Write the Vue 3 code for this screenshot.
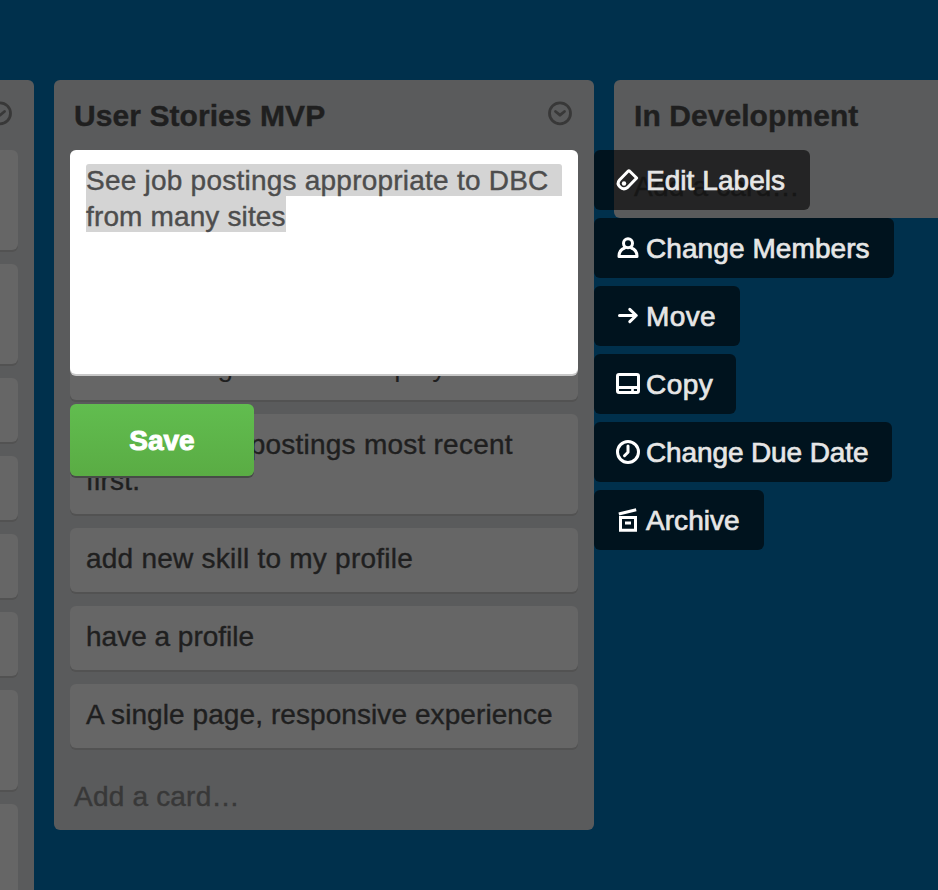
<script setup>
const leftCards = ['two', 'two', 'one', 'one', 'one', 'one', 'two', 'two']
const actions = [
  { id: 'labels', text: 'Edit Labels' },
  { id: 'members', text: 'Change Members' },
  { id: 'move', text: 'Move' },
  { id: 'copy', text: 'Copy' },
  { id: 'due', text: 'Change Due Date' },
  { id: 'archive', text: 'Archive' }
]
</script>

<template>
  <main class="board">
    <section class="list previous">
      <header class="head"><h2></h2>
        <svg class="chevron" viewBox="0 0 24 24"><circle cx="12" cy="12.300" r="10.500" /><path d="M7.500 10.500 12 14.200l4.500-3.700" /></svg>
      </header>
      <div class="cards">
        <article v-for="(size, i) in leftCards" :key="i" class="card" :class="size"></article>
      </div>
    </section>

    <section class="list stories">
      <header class="head"><h2>User Stories MVP</h2>
        <svg class="chevron" viewBox="0 0 24 24"><circle cx="12" cy="12.300" r="10.500" /><path d="M7.500 10.500 12 14.200l4.500-3.700" /></svg>
      </header>
      <div class="cards">
        <article class="card three"></article>
        <article class="card two"><p class="t-wide t-plain"><br>of matching titles are displayed on a</p></article>
        <article class="card two"><p class="t-wide">Order all job postings most recent<br>first.</p></article>
        <article class="card one"><p class="t-wide">add new skill to my profile</p></article>
        <article class="card one"><p>have a profile</p></article>
        <article class="card one"><p class="t-single">A single page, responsive experience</p></article>
      </div>
      <footer class="add">Add a card…</footer>

      <div class="editor">
        <div class="edit-card"><p><span class="sel first">See job postings appropriate to DBC</span><span class="sel second">from many sites</span></p></div>
        <button class="save">Save</button>
      </div>

      <nav class="actions">
        <a v-for="a in actions" :key="a.id" class="action" :class="a.id">
          <svg class="icon" viewBox="0 0 24 24">
            <g v-if="a.id === 'labels'"><path d="M13.500 3 20.700 10 11.500 19.500Q7.500 22.500 4 19T3.500 12L12 3.200Q12.800 2.400 13.500 3Z" /><circle class="solid" cx="8" cy="15.500" r="2.200" /></g>
            <g v-else-if="a.id === 'members'"><circle cx="12" cy="7.300" r="4.500" /><path d="M8.500 12Q3 14 3 20.500H21Q21 14 15.500 12" /></g>
            <path v-else-if="a.id === 'move'" d="M3.500 11.500H20M13.800 5.300l6.500 6.200-6.500 6.200" />
            <g v-else-if="a.id === 'copy'"><rect x="1.500" y="2.500" width="21" height="18" rx="1.500" /><path d="M2 15.500H22" /><path class="solid" d="M2 17H15V20H2ZM19.500 17H22V20H19.500Z" opacity="0" /><circle class="solid" cx="16.500" cy="18" r="1.500" /></g>
            <g v-else-if="a.id === 'due'"><circle cx="12" cy="12" r="10.500" /><path d="M12 6V12.200L8.500 15.700" /></g>
            <g v-else class="square"><path d="M2.800 6 20.200 1.800M4.500 9.500H19.500V22.200H4.500ZM9 15H15" /></g>
          </svg>
          <span>{{ a.text }}</span>
        </a>
      </nav>
    </section>

    <section class="list development">
      <header class="head"><h2>In Development</h2></header>
      <footer class="add">Add a card…</footer>
    </section>
  </main>
</template>

<style>
body { margin: 0; background: #00304c; }
</style>

<style scoped>
.board {
  box-sizing: border-box;
  width: 938px;
  height: 890px;
  padding-top: 80px;
  overflow: hidden;
  display: flex;
  align-items: flex-start;
  gap: 20px;
  background: #00304c;
  font-family: "Liberation Sans", Arial, sans-serif;
  font-size: 28px;
  line-height: 36px;
  color: #1f1f1f;
  -webkit-text-stroke: .4px currentColor;
}
.list {
  position: relative;
  flex: none;
  box-sizing: border-box;
  width: 540px;
  background: #5a5b5c;
  border-radius: 6px;
}
.previous { margin-left: -506px; }
.stories { height: 750px; z-index: 1; }
.development { height: 138px; }
.head {
  box-sizing: border-box;
  height: 70px;
  padding: 18px 22px 0 20px;
  display: flex;
  justify-content: space-between;
}
h2 { margin: 0; font-size: 30px; line-height: 36px; font-weight: 700; letter-spacing: .07px; white-space: nowrap; }
.chevron { width: 24px; height: 24px; margin-top: 3px; fill: none; stroke: #383838; stroke-width: 2.8; stroke-linecap: round; stroke-linejoin: round; overflow: visible; }
.cards { padding: 0 16px; display: flex; flex-direction: column; gap: 14px; }
.card { box-sizing: border-box; padding: 13px 16px 11px; border-radius: 6px; background: #666; box-shadow: 0 2px 0 #525252; white-space: nowrap; }
.card p { margin: 0; }
.t-wide { letter-spacing: .24px; }
.t-plain { -webkit-text-stroke: 0; }
.t-single { letter-spacing: .08px; }
.one { height: 64px; }
.two { height: 100px; }
.three { height: 136px; }
.add { padding: 31px 20px; color: #383838; letter-spacing: .2px; }
.development .add { padding-top: 19px; }
.editor { position: absolute; left: 16px; top: 70px; width: 508px; }
.edit-card { box-sizing: border-box; height: 224px; padding: 14px 16px; background: #fff; border-radius: 6px; box-shadow: 0 2px 0 #c8c8c8; color: #4d4d4d; }
.edit-card p { margin: 0; }
.sel { display: block; box-sizing: border-box; background: #d4d4d4; white-space: nowrap; }
.first { height: 32px; line-height: 34px; border-radius: 3px 3px 0 0; letter-spacing: .23px; }
.second { height: 36px; width: 200px; line-height: 42px; letter-spacing: .14px; }
.save {
  display: block; width: 184px; height: 72px; margin-top: 30px; padding: 0; border: 0; border-radius: 6px;
  background: linear-gradient(#61bd4f, #5aac44); box-shadow: 0 2px 0 #474b47;
  color: #fff; font: 700 28px/74px "Liberation Sans", Arial, sans-serif;
  -webkit-text-stroke: 1px #fff;
}
.actions { position: absolute; left: 540px; top: 70px; display: flex; flex-direction: column; align-items: flex-start; gap: 8px; }
.action { box-sizing: border-box; height: 60px; padding: 13px 0 11px 22px; display: flex; gap: 6px; border-radius: 6px; background: rgba(0, 0, 0, .6); color: #e6e6e6; white-space: nowrap; -webkit-text-stroke: .7px currentColor; }
.icon { flex: none; width: 24px; height: 24px; margin-top: 5px; fill: none; stroke: #fff; stroke-width: 3; stroke-linecap: round; stroke-linejoin: round; overflow: visible; }
.square { stroke-linecap: butt; stroke-linejoin: miter; }
.solid { fill: #fff; stroke: none; }
.labels { width: 216px; letter-spacing: .05px; }
.members { width: 300px; letter-spacing: .08px; }
.move { width: 146px; letter-spacing: .4px; }
.copy { width: 142px; letter-spacing: .45px; }
.due { width: 298px; letter-spacing: -.12px; }
.archive { width: 170px; letter-spacing: .05px; }
</style>
